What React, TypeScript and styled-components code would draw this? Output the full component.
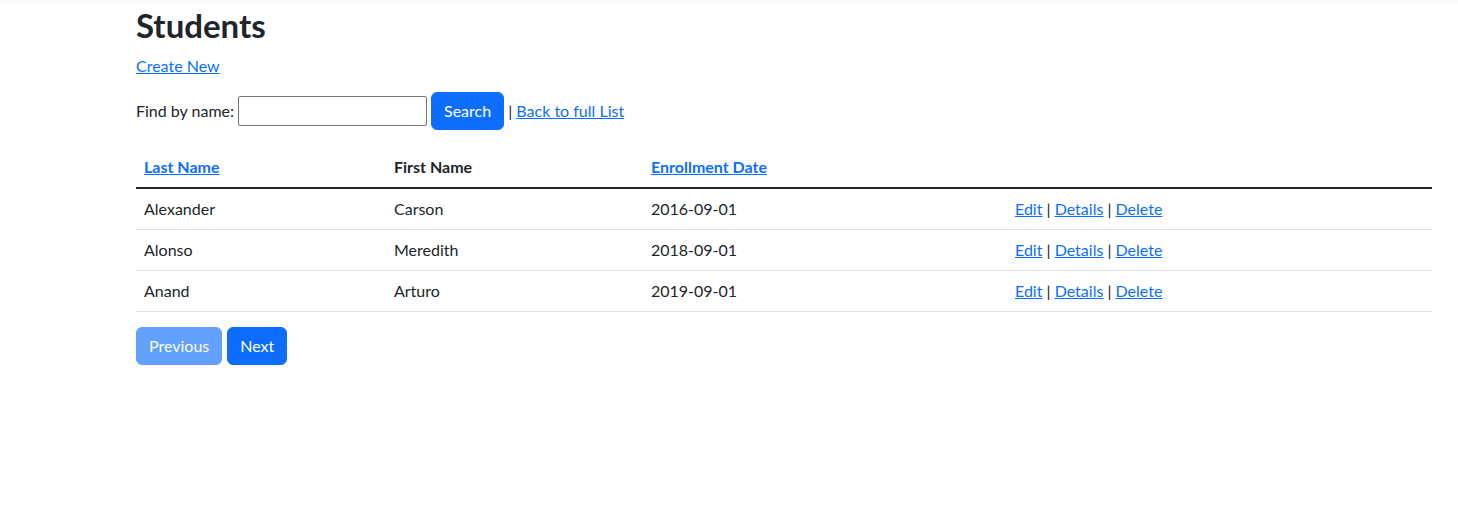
import React from "react";
import styled, { createGlobalStyle } from "styled-components";

const GlobalStyle = createGlobalStyle`
  html, body {
    margin: 0;
    padding: 0;
    background: #fff;
  }
  body {
    font-family: Lato, "Open Sans", sans-serif;
    font-size: 16px;
    line-height: 1.5;
    color: #212529;
  }
`;

const TopShade = styled.div`
  height: 5px;
  background: linear-gradient(#f8f8f8, #fff);
`;

const Main = styled.main`
  padding: 1px 26px 0 136px;
`;

const Title = styled.h2`
  margin: 0 0 8px;
  font-size: 33px;
  font-weight: 700;
  line-height: 1.2;
`;

const Para = styled.p`
  margin: 0 0 14px;
`;

const Link = styled.a`
  color: #0d6efd;
  text-decoration: underline;
  cursor: pointer;
`;

const SearchRow = styled.p`
  display: flex;
  align-items: center;
  margin: 0 0 17px;
  white-space: pre;
`;

const TextInput = styled.input`
  width: 189px;
  height: 30px;
  box-sizing: border-box;
  margin: 0 4px;
  border: 1px solid #767676;
  border-radius: 2px;
  font: inherit;
`;

const Button = styled.button<{ $disabled?: boolean }>`
  font-family: inherit;
  font-size: 16px;
  line-height: 1.5;
  color: #fff;
  background: #0d6efd;
  border: 1px solid #0d6efd;
  border-radius: 6px;
  padding: 6px 12px;
  opacity: ${(p) => (p.$disabled ? 0.65 : 1)};
`;

const Table = styled.table`
  width: 1296px;
  border-collapse: collapse;
  margin-bottom: 15px;
`;

const Th = styled.th<{ $w: number }>`
  width: ${(p) => p.$w}px;
  text-align: left;
  font-weight: 700;
  padding: 8px;
  height: 38px;
  box-sizing: border-box;
  vertical-align: bottom;
  border-bottom: 2px solid #212529;
`;

const Td = styled.td`
  padding: 8px;
  border-bottom: 1px solid #dee2e6;
`;

const Pager = styled.div`
  display: flex;
  gap: 5px;
`;

const students = [
  { last: "Alexander", first: "Carson", date: "2016-09-01" },
  { last: "Alonso", first: "Meredith", date: "2018-09-01" },
  { last: "Anand", first: "Arturo", date: "2019-09-01" },
];

const App: React.FC = () => {
  return (
    <>
      <GlobalStyle />
      <TopShade />
      <Main>
        <Title>Students</Title>
        <Para>
          <Link>Create New</Link>
        </Para>
        <SearchRow>
          Find by name:
          <TextInput type="text" />
          <Button>Search</Button> | <Link>Back to full List</Link>
        </SearchRow>
        <Table>
          <thead>
            <tr>
              <Th $w={250}>
                <Link>Last Name</Link>
              </Th>
              <Th $w={257}>First Name</Th>
              <Th $w={364}>
                <Link>Enrollment Date</Link>
              </Th>
              <Th $w={425} />
            </tr>
          </thead>
          <tbody>
            {students.map((s) => (
              <tr key={s.last}>
                <Td>{s.last}</Td>
                <Td>{s.first}</Td>
                <Td>{s.date}</Td>
                <Td>
                  <Link>Edit</Link> | <Link>Details</Link> |{" "}
                  <Link>Delete</Link>
                </Td>
              </tr>
            ))}
          </tbody>
        </Table>
        <Pager>
          <Button $disabled>Previous</Button>
          <Button>Next</Button>
        </Pager>
      </Main>
    </>
  );
};

export default App;
